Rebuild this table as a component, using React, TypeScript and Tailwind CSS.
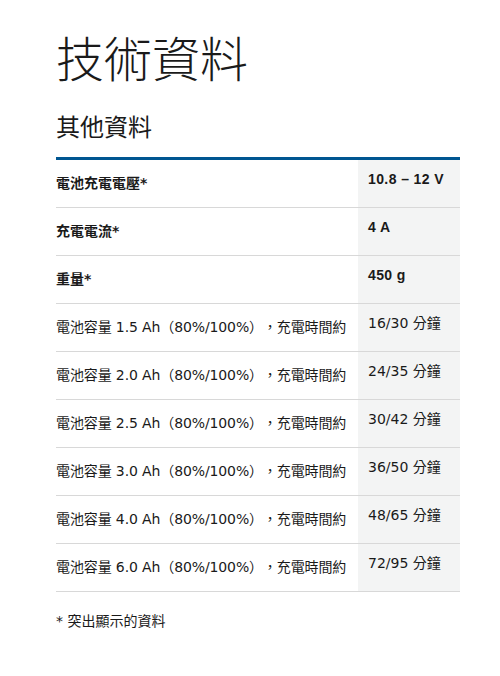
const rows = [
  { label: "電池充電電壓*", value: "10.8 – 12 V", bold: true },
  { label: "充電電流*", value: "4 A", bold: true },
  { label: "重量*", value: "450 g", bold: true },
  { label: "電池容量 1.5 Ah（80%/100%），充電時間約", value: "16/30 分鐘" },
  { label: "電池容量 2.0 Ah（80%/100%），充電時間約", value: "24/35 分鐘" },
  { label: "電池容量 2.5 Ah（80%/100%），充電時間約", value: "30/42 分鐘" },
  { label: "電池容量 3.0 Ah（80%/100%），充電時間約", value: "36/50 分鐘" },
  { label: "電池容量 4.0 Ah（80%/100%），充電時間約", value: "48/65 分鐘" },
  { label: "電池容量 6.0 Ah（80%/100%），充電時間約", value: "72/95 分鐘" },
];

export default function App() {
  return (
    <div lang="zh-TW" className="min-h-[676px] bg-white px-[56px] text-[#1a1a1a] [text-spacing-trim:space-all] font-['DejaVu_Sans','Noto_Sans_CJK_TC',sans-serif]">
      <h1 className="pt-[30px] text-[48px] leading-[60px] font-light">技術資料</h1>
      <h2 className="mt-[22px] text-[24px] leading-[32px]">其他資料</h2>

      {/* spec table */}
      <div className="mt-[13px] w-[404px] border-t-[3px] border-[#005691]">
        {rows.map((r, i) => (
          <div key={i} className="grid grid-cols-[302px_102px] border-b border-[#d8d8d8]">
            <div className={`flex items-center py-[14px] text-[14px] leading-[19px] whitespace-nowrap ${r.bold ? "font-bold" : "tracking-[-0.12px]"}`}>
              {r.label}
            </div>
            {r.bold ? (
              <div className="bg-[#f3f4f4] pl-[10px] pt-[10px] text-[14px] leading-[19px] font-bold tracking-[0.4px] font-['Liberation_Sans','Noto_Sans_CJK_TC',sans-serif]">
                {r.value}
              </div>
            ) : (
              <div className="bg-[#f3f4f4] pl-[10px] pt-[10px] text-[14px] leading-[19px]">
                {r.value}
              </div>
            )}
          </div>
        ))}
      </div>

      <p className="mt-[20px] text-[14px] leading-[19px]">* 突出顯示的資料</p>
    </div>
  );
}
